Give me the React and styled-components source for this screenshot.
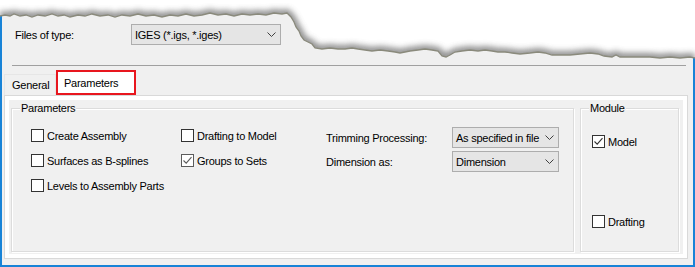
import styled, { createGlobalStyle, css } from 'styled-components';

const GlobalStyle = createGlobalStyle`
  html, body {
    margin: 0;
    padding: 0;
    background: #fff;
  }
  body {
    font-family: "Liberation Sans", Arial, sans-serif;
    font-size: 11px;
    letter-spacing: -0.25px;
    color: #000;
  }
`;

// torn paper edge along the top of the capture
const edge = [
  [0, 16], [5, 15], [10, 16], [14, 14], [20, 16], [26, 15], [32, 17], [38, 15], [45, 16],
  [52, 14], [58, 16], [64, 15], [70, 17], [78, 15], [85, 16], [92, 14], [100, 16], [108, 15],
  [115, 17], [122, 15], [130, 16], [138, 14], [146, 16], [154, 15], [162, 17], [170, 15],
  [178, 16], [186, 14], [194, 16], [202, 15], [210, 13], [218, 15], [226, 14], [234, 16],
  [242, 14], [250, 15], [258, 14], [266, 15], [274, 13], [282, 14], [287, 13], [291, 17],
  [294, 22], [296, 27], [299, 31], [301, 36], [304, 40], [308, 42], [312, 44], [315, 48],
  [322, 49], [330, 48], [338, 49], [345, 49], [352, 48], [358, 49], [365, 50], [372, 51],
  [380, 50], [388, 51], [395, 52], [400, 53], [405, 52], [410, 51], [418, 50], [425, 49],
  [432, 50], [438, 51], [442, 56], [446, 57], [450, 55], [455, 52], [462, 51], [470, 50],
  [478, 51], [485, 50], [492, 51], [498, 52], [505, 52], [512, 53], [520, 54], [530, 53],
  [538, 52], [545, 53], [552, 55], [560, 55], [570, 55], [580, 54], [590, 53], [598, 54],
  [604, 56], [612, 57], [616, 55], [620, 57], [630, 57], [640, 57], [650, 57], [660, 58],
  [670, 57], [680, 58], [690, 57], [695, 58],
];
const edgeLine = edge.map((p) => p.join(',')).join(' ');

const TornEdge = () => (
  <EdgeSvg width="695" height="72" viewBox="0 0 695 72">
    <defs>
      <clipPath id="paper-above">
        <polygon points={`0,0 ${edgeLine} 695,0`} />
      </clipPath>
      <filter id="soft" x="-5%" y="-50%" width="110%" height="200%">
        <feGaussianBlur stdDeviation="3" />
      </filter>
    </defs>
    <polygon points={`0,0 ${edgeLine} 695,0`} fill="#fff" />
    <g clipPath="url(#paper-above)">
      <polyline points={edgeLine} fill="none" stroke="#5e5e5e" strokeWidth="7" opacity="0.8" filter="url(#soft)" />
    </g>
    <polyline points={edgeLine} fill="none" stroke="#8a8a7c" strokeWidth="1.3" />
  </EdgeSvg>
);

const Chevron = () => (
  <svg width="9" height="5" viewBox="0 0 9 5">
    <path d="M0.5 0.5 L4.5 4.5 L8.5 0.5" fill="none" stroke="#404040" strokeWidth="1" />
  </svg>
);

const Check = ({ checked, tone }) => (
  <Box $tone={tone}>
    {checked && (
      <svg width="11" height="11" viewBox="0 0 11 11">
        <path d="M1.5 5.5 L4.2 8.2 L9.5 2.2" fill="none" stroke={tone || '#333'} strokeWidth="1.1" />
      </svg>
    )}
  </Box>
);

const CheckItem = ({ label, checked, tone }) => (
  <CheckRow>
    <Check checked={checked} tone={tone} />
    <span>{label}</span>
  </CheckRow>
);

const Combo = ({ width, value }) => (
  <Select $w={width}>
    <span>{value}</span>
    <Chevron />
  </Select>
);

const App = () => (
  <Page>
    <GlobalStyle />
    <Window>
      <FileRow>
        <FieldLabel $w={116}>Files of type:</FieldLabel>
        <Combo width={150} value="IGES (*.igs, *.iges)" />
      </FileRow>
      <Separator />
      <TabStrip>
        <Tab>General</Tab>
        <Tab $active>Parameters</Tab>
      </TabStrip>
      <Panel>
        <PageArea>
          <Group $w={563}>
            <GroupTitle $left={8}>Parameters</GroupTitle>
            <ParamsBody>
              <Column $w={150}>
                <CheckItem label="Create Assembly" />
                <CheckItem label="Surfaces as B-splines" />
                <CheckItem label="Levels to Assembly Parts" />
              </Column>
              <Column $w={145}>
                <CheckItem label="Drafting to Model" />
                <CheckItem label="Groups to Sets" checked tone="#5c5c5c" />
              </Column>
              <FormGrid>
                <FieldLabel $w={126}>Trimming Processing:</FieldLabel>
                <Combo width={107} value="As specified in file" />
                <FieldLabel $w={126}>Dimension as:</FieldLabel>
                <Combo width={107} value="Dimension" />
              </FormGrid>
            </ParamsBody>
          </Group>
          <Group $w={99}>
            <GroupTitle $left={8}>Module</GroupTitle>
            <ModuleBody>
              <CheckItem label="Model" checked />
              <CheckItem label="Drafting" />
            </ModuleBody>
          </Group>
        </PageArea>
      </Panel>
    </Window>
    <TornEdge />
  </Page>
);

const Page = styled.div`
  position: relative;
  width: 695px;
  height: 267px;
  background: #fff;
  overflow: hidden;
`;

const EdgeSvg = styled.svg`
  position: absolute;
  top: 0;
  left: 0;
  pointer-events: none;
`;

const Window = styled.div`
  box-sizing: border-box;
  height: 267px;
  background: #f0f0f0;
  border: 2px solid #1883d7;
  border-top: none;
  display: flex;
  flex-direction: column;
`;

const FileRow = styled.div`
  display: flex;
  align-items: center;
  height: 21px;
  margin: 24px 0 0 13px;
`;

const FieldLabel = styled.span`
  flex: none;
  width: ${(p) => p.$w}px;
  white-space: nowrap;
`;

const Select = styled.div`
  box-sizing: border-box;
  width: ${(p) => p.$w}px;
  height: 21px;
  display: flex;
  align-items: center;
  justify-content: space-between;
  padding: 0 4px 0 3px;
  background: #e5e5e5;
  border: 1px solid #adadad;
  white-space: nowrap;
`;

const Separator = styled.div`
  width: 674px;
  height: 1px;
  margin: 20px 0 0 10px;
  background: #a0a0a0;
`;

const TabStrip = styled.div`
  display: flex;
  align-items: flex-end;
  height: 25px;
  margin-top: 4px;
  padding-left: 2px;
`;

const Tab = styled.div`
  box-sizing: border-box;
  display: flex;
  align-items: center;
  white-space: nowrap;
  ${(p) =>
    p.$active
      ? css`
          width: 80px;
          height: 25px;
          padding: 1px 0 0 6px;
          background: #fff;
          border: 2px solid #e8161e;
        `
      : css`
          width: 52px;
          height: 21px;
          padding: 0 0 0 7px;
          border: 1px solid #e6e6e6;
          border-bottom: none;
        `}
`;

const Panel = styled.div`
  box-sizing: border-box;
  width: 684px;
  height: 164px;
  margin-left: 2px;
  padding: 4px;
  border: 1px solid #d9d9d9;
  background: #fff;
`;

const PageArea = styled.div`
  box-sizing: border-box;
  height: 100%;
  display: flex;
  gap: 6px;
  padding: 8px 4px 2px 2px;
  background: #f0f0f0;
`;

const Group = styled.div`
  position: relative;
  box-sizing: border-box;
  width: ${(p) => p.$w}px;
  height: 100%;
  border: 1px solid #dcdcdc;
  box-shadow: inset 1px 1px 0 #fff, 1px 1px 0 #fff;
`;

const GroupTitle = styled.span`
  position: absolute;
  top: -8px;
  left: ${(p) => p.$left}px;
  padding: 0 1px;
  line-height: 14px;
  background: #f0f0f0;
`;

const ParamsBody = styled.div`
  display: flex;
  align-items: flex-start;
  padding: 20px 0 0 19px;
`;

const Column = styled.div`
  display: flex;
  flex-direction: column;
  gap: 12px;
  width: ${(p) => p.$w}px;
`;

const FormGrid = styled.div`
  display: grid;
  grid-template-columns: 126px 107px;
  row-gap: 3px;
  align-items: center;
  margin-top: -2px;
`;

const ModuleBody = styled.div`
  box-sizing: border-box;
  height: 100%;
  display: flex;
  flex-direction: column;
  justify-content: space-between;
  padding: 26px 0 23px 11px;
`;

const CheckRow = styled.div`
  display: flex;
  align-items: center;
  gap: 3px;
  height: 13px;
  white-space: nowrap;
`;

const Box = styled.span`
  box-sizing: border-box;
  flex: none;
  width: 13px;
  height: 13px;
  display: flex;
  align-items: center;
  justify-content: center;
  background: #fff;
  border: 1px solid ${(p) => p.$tone || '#333'};
`;

export default App;
